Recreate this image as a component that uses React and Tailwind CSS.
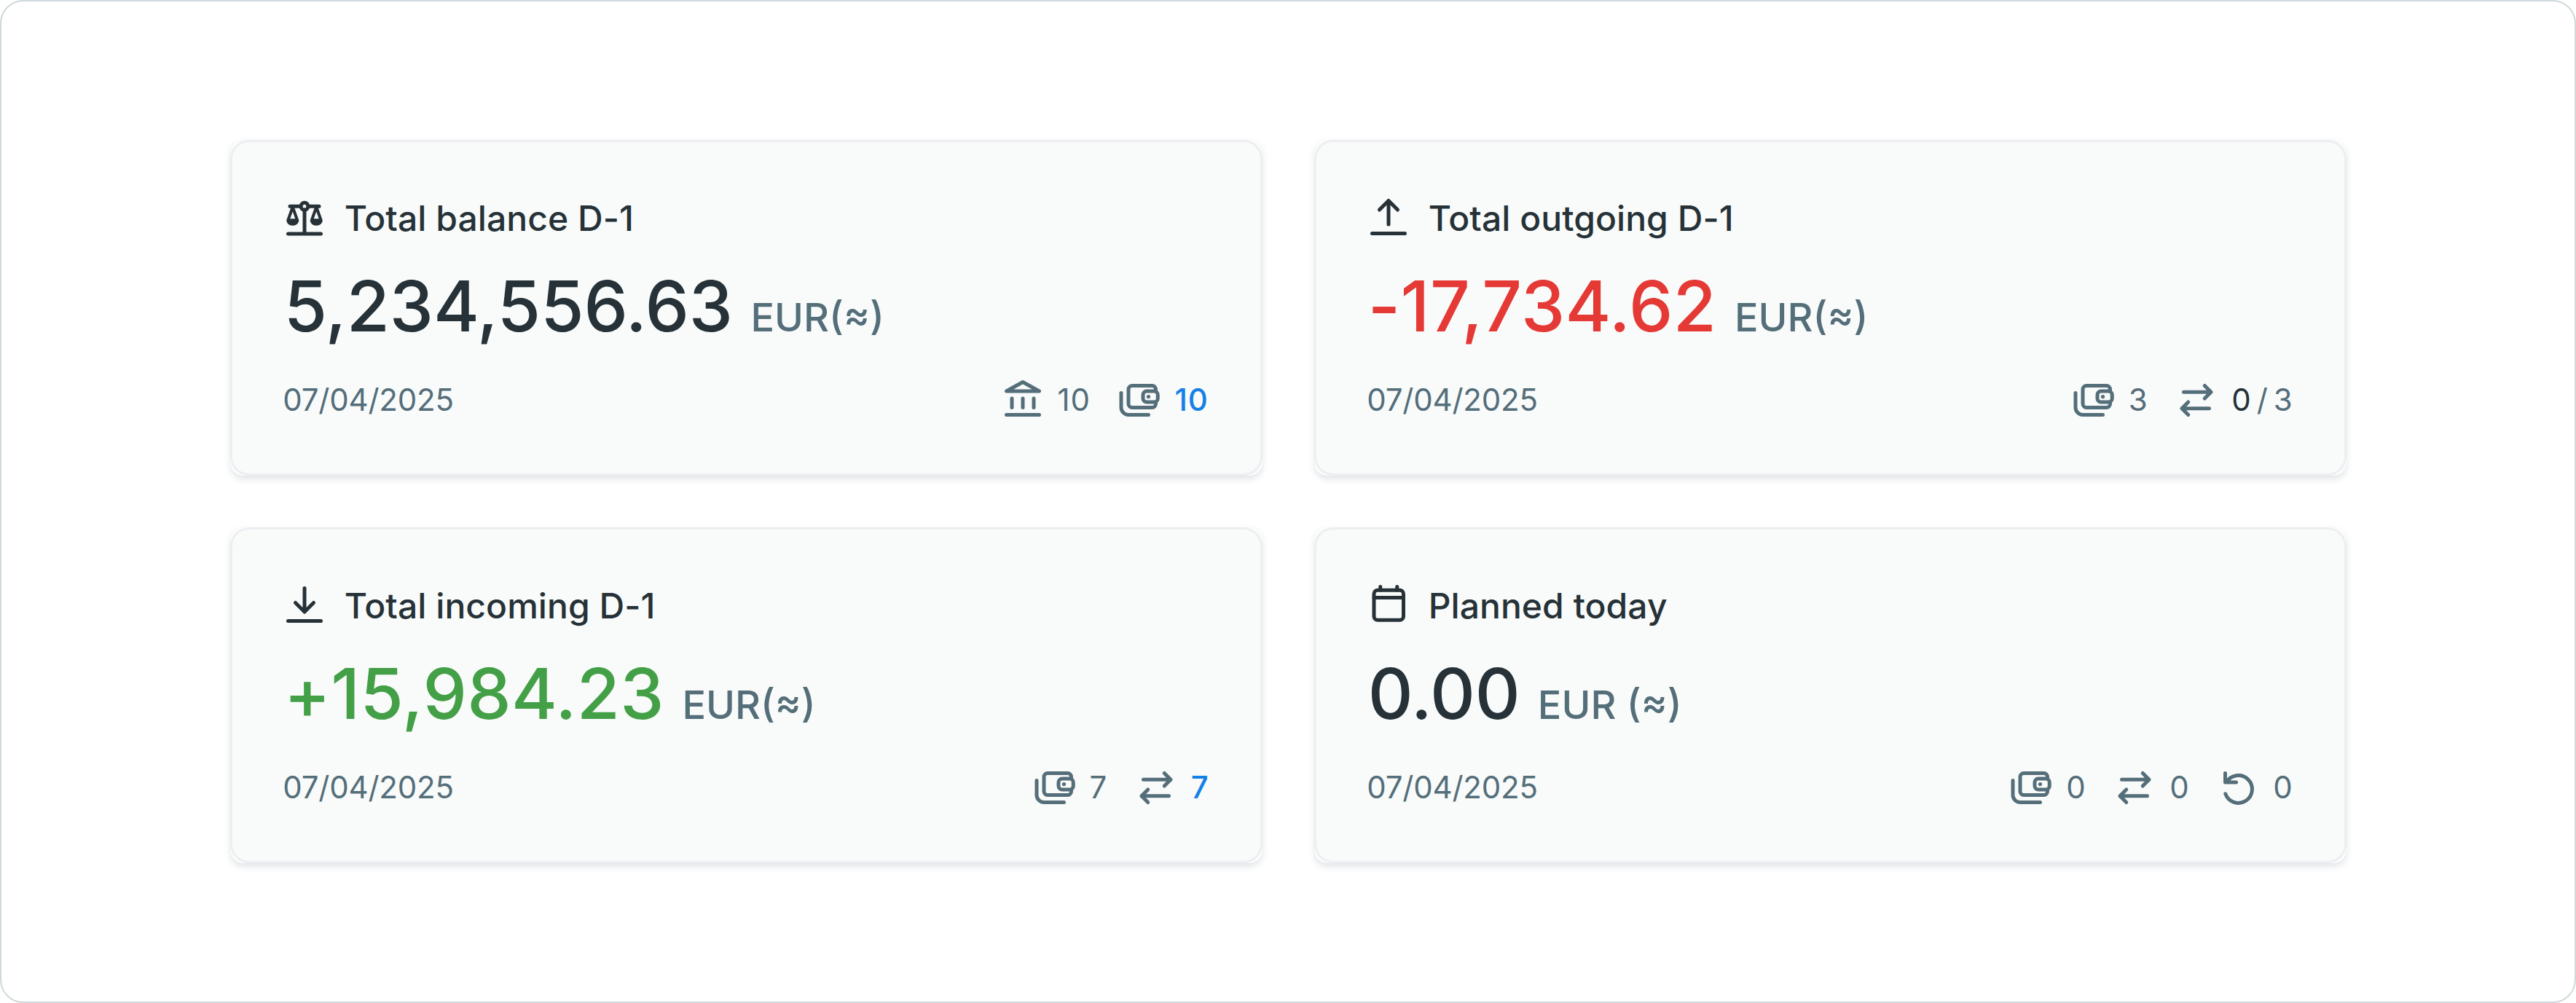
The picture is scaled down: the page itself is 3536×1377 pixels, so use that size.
import React from "react";

function Icon({ children }) {
  return (
    <svg
      viewBox="0 0 24 24"
      className="size-[60px] shrink-0"
      fill="none"
      stroke="currentColor"
      strokeWidth="2"
      strokeLinecap="round"
      strokeLinejoin="round"
      aria-hidden="true"
    >
      {children}
    </svg>
  );
}

const ScaleIcon = () => (
  <Icon>
    <path d="M3 21.2h18M12 8v13M4 6.1h6M14 6.1h6" />
    <circle cx="12" cy="6.1" r="2" />
    <g fill="currentColor" stroke="none" fillRule="evenodd">
      <path d="M4.6 6.6L2.1 13.7c0 1.8 1.5 3 3.4 3s3.4-1.2 3.4-3L6.4 6.6zM5.5 9l1.4 3.9H4.1z" />
      <path d="M17.6 6.6l-2.5 7.1c0 1.8 1.5 3 3.4 3s3.4-1.2 3.4-3l-2.5-7.1zM18.5 9l1.4 3.9h-2.8z" />
    </g>
  </Icon>
);

const OutgoingIcon = () => (
  <Icon>
    <path d="M12 16V3M7 8l5-5 5 5M3 21h18" />
  </Icon>
);

const IncomingIcon = () => (
  <Icon>
    <path d="M12 3v13M7 11l5 5 5-5M3 21h18" />
  </Icon>
);

const CalendarIcon = () => (
  <Icon>
    <rect x="4" y="4.1" width="16.2" height="16.4" rx="2" />
    <path d="M4 8.2h16.2M7.5 2.2v1.9M16.7 2.2v1.9" />
  </Icon>
);

const BankIcon = () => (
  <Icon>
    <path d="M3 21h18M3 8l9-5 9 5zM6 12v5M12 12v5M18 12v5" />
  </Icon>
);

const WalletsIcon = () => (
  <Icon>
    <path d="M2 9v8a4 4 0 0 0 4 4h11" />
    <path d="M21 7.5V7a2 2 0 0 0-2-2H8a2 2 0 0 0-2 2v8a2 2 0 0 0 2 2h11a2 2 0 0 0 2-2v-.5" />
    <rect x="14" y="8" width="8.1" height="6" rx="2" />
    <circle cx="17" cy="11" r="1.05" fill="currentColor" stroke="none" />
  </Icon>
);

const TransfersIcon = () => (
  <Icon>
    <path d="M5 8.5h15M16.5 5l3.5 3.5-3.5 3.5M19 17.5H4M7.5 14L4 17.5 7.5 21" />
  </Icon>
);

const RestoreIcon = () => (
  <Icon>
    <path d="M5 5v5h6M5.7 10A7.55 7.55 0 1 1 5.1 16.3" />
  </Icon>
);

function Stat({ icon, children, className = "text-[#546e7a]" }) {
  return (
    <div className="flex items-center gap-[18px] text-[#546e7a]">
      {icon}
      <span className={`pt-1 ${className}`}>{children}</span>
    </div>
  );
}

function Card({ icon, title, amount, amountClass, currency, children }) {
  return (
    <section className="rounded-[18px] bg-[#fbfcfc] shadow-[0_4.5px_9px_rgba(69,90,100,0.15),0_0_1px_rgba(69,90,100,0.06)]">
      <div className="flex h-full flex-col rounded-[26px] border-[3px] border-[#eceef2] bg-[#f9fbfa] pt-[73.2px] pr-[70.7px] pl-[69.7px]">
        <div className="flex h-[60px] items-center gap-[24.5px] text-[#263238]">
          {icon}
          <h2 className="pt-[3px] text-[48px] leading-[57px] font-medium tracking-[0.05px] whitespace-nowrap">{title}</h2>
        </div>
        <div className="mt-[31.5px] flex h-[120px] items-baseline gap-[24.5px] pl-[1.5px] leading-[120px] font-medium whitespace-nowrap">
          <span className={`text-[96px] ${amountClass}`}>{amount}</span>
          <span className="text-[54px] text-[#546e7a]">{currency}</span>
        </div>
        <div className="mt-[37.5px] flex items-center justify-between text-[42px] leading-[56px] text-[#546e7a]">
          <span className="pt-1 tracking-[-0.2px]">07/04/2025</span>
          <div className="flex gap-[37.5px]">{children}</div>
        </div>
      </div>
    </section>
  );
}

export default function App() {
  return (
    <main className="h-[1377px] w-[3536px] bg-white font-['Inter',sans-serif]">
      <div className="h-full rounded-[32px] border-2 border-[#cfd8dc] px-[313.5px] pt-[190px]">
        <div className="grid grid-cols-2 grid-rows-[461px_461px] gap-x-[71px] gap-y-[71.3px]">
          <Card
            icon={<ScaleIcon />}
            title="Total balance D-1"
            amount="5,234,556.63"
            amountClass="text-[#263238]"
            currency="EUR(≈)"
          >
            <Stat icon={<BankIcon />} className="tracking-[0.9px]">10</Stat>
            <Stat icon={<WalletsIcon />} className="font-medium tracking-[0.9px] text-[#1581e6]">10</Stat>
          </Card>
          <Card
            icon={<OutgoingIcon />}
            title="Total outgoing D-1"
            amount="-17,734.62"
            amountClass="text-[#e53935] tracking-[0.5px]"
            currency="EUR(≈)"
          >
            <Stat icon={<WalletsIcon />}>3</Stat>
            <Stat icon={<TransfersIcon />} className="flex gap-2">
              <span className="text-[#263238]">0</span>
              <span>/</span>
              <span>3</span>
            </Stat>
          </Card>
          <Card
            icon={<IncomingIcon />}
            title="Total incoming D-1"
            amount="+15,984.23"
            amountClass="text-[#43a047] tracking-[0.4px]"
            currency="EUR(≈)"
          >
            <Stat icon={<WalletsIcon />}>7</Stat>
            <Stat icon={<TransfersIcon />} className="font-medium text-[#1581e6]">7</Stat>
          </Card>
          <Card
            icon={<CalendarIcon />}
            title="Planned today"
            amount="0.00"
            amountClass="text-[#263238] tracking-[-0.3px]"
            currency="EUR (≈)"
          >
            <Stat icon={<WalletsIcon />}>0</Stat>
            <Stat icon={<TransfersIcon />}>0</Stat>
            <Stat icon={<RestoreIcon />}>0</Stat>
          </Card>
        </div>
      </div>
    </main>
  );
}
